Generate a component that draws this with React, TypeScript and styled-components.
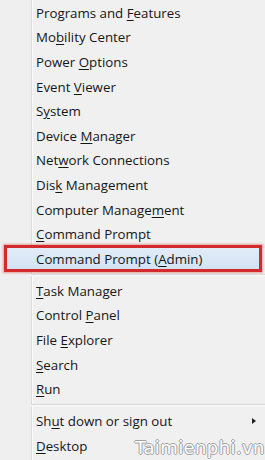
import React from 'react'
import styled, { createGlobalStyle } from 'styled-components'

const GlobalStyle = createGlobalStyle`
  html, body {
    margin: 0;
    padding: 0;
    background: #f0f0f0;
  }
  body {
    font-family: "Open Sans", "Noto Sans", sans-serif;
  }
`

type MenuItem = {
  label: string
  key: number // index of the access-key letter
  active?: boolean
  submenu?: boolean
}

const groups: MenuItem[][] = [
  [
    { label: 'Programs and Features', key: 13 },
    { label: 'Mobility Center', key: 2 },
    { label: 'Power Options', key: 6 },
    { label: 'Event Viewer', key: 6 },
    { label: 'System', key: 1 },
    { label: 'Device Manager', key: 7 },
    { label: 'Network Connections', key: 3 },
    { label: 'Disk Management', key: 3 },
    { label: 'Computer Management', key: 15 },
    { label: 'Command Prompt', key: 0 },
    { label: 'Command Prompt (Admin)', key: 16, active: true },
  ],
  [
    { label: 'Task Manager', key: 0 },
    { label: 'Control Panel', key: 8 },
    { label: 'File Explorer', key: 5 },
    { label: 'Search', key: 0 },
    { label: 'Run', key: 0 },
  ],
  [
    { label: 'Shut down or sign out', key: 2, submenu: true },
    { label: 'Desktop', key: 0 },
  ],
]

const Page = styled.div`
  position: relative;
  width: 265px;
  height: 460px;
  overflow: hidden;
`

const Menu = styled.div`
  display: flex;
  flex-direction: column;
  padding-top: 0.5px;
  min-height: 100%;
  box-sizing: border-box;
  background: linear-gradient(
    to right,
    #efefef 0,
    #efefef 31px,
    #dcdcdc 31px,
    #dcdcdc 32px,
    #fbfbfb 32px,
    #fbfbfb 33px,
    #f0f0f0 33px
  );
`

const Row = styled.div<{ $active?: boolean }>`
  display: flex;
  align-items: center;
  justify-content: space-between;
  box-sizing: border-box;
  height: ${({ $active }) => ($active ? '27px' : '24.6px')};
  margin: ${({ $active }) => ($active ? '-1.2px 3px -1.2px 4px' : '0')};
  padding: ${({ $active }) => ($active ? '0 8px 0 29px' : '0 8px 0 36px')};
  font-size: 13.3px;
  color: #161616;
  white-space: nowrap;
  background: ${({ $active }) =>
    $active ? 'linear-gradient(to bottom, #e2ecf8, #d3e2f3)' : 'transparent'};
  border: ${({ $active }) => ($active ? '3px solid #d32a2e' : 'none')};
  box-shadow: ${({ $active }) =>
    $active ? '0 0 2px 1px rgba(210, 60, 60, 0.45)' : 'none'};
`

const Key = styled.span`
  text-decoration: underline;
  text-underline-offset: 2px;
  text-decoration-thickness: 1px;
`

const Arrow = styled.span`
  width: 0;
  height: 0;
  margin-right: 1px;
  border-top: 3.5px solid transparent;
  border-bottom: 3.5px solid transparent;
  border-left: 4px solid #222;
`

const Separator = styled.div`
  height: 7.4px;
  margin-left: 31px;
  display: flex;
  align-items: center;
  &::before {
    content: '';
    flex: 1;
    height: 1px;
    background: #d6d6d6;
    border-bottom: 1px solid #fcfcfc;
  }
`

const Watermark = styled.div`
  position: absolute;
  left: 135px;
  top: 437px;
  font-family: "DejaVu Sans", sans-serif;
  font-size: 18px;
  letter-spacing: 0.4px;
  color: #ffffff;
  white-space: nowrap;
  text-shadow: 1px 0 0 #a0a0a0, -1px 0 0 #a0a0a0, 0 1px 0 #a0a0a0, 0 -1px 0 #a0a0a0;
`

const Label = ({ item }: { item: MenuItem }) => (
  <span>
    {item.label.slice(0, item.key)}
    <Key>{item.label[item.key]}</Key>
    {item.label.slice(item.key + 1)}
  </span>
)

export default function App() {
  return (
    <>
      <GlobalStyle />
      <Page>
        <Menu>
          {groups.map((group, gi) => (
            <React.Fragment key={gi}>
              {gi > 0 && <Separator />}
              {group.map((item) => (
                <Row key={item.label} $active={item.active}>
                  <Label item={item} />
                  {item.submenu && <Arrow />}
                </Row>
              ))}
            </React.Fragment>
          ))}
        </Menu>
        <Watermark>Taimienphi.vn</Watermark>
      </Page>
    </>
  )
}
